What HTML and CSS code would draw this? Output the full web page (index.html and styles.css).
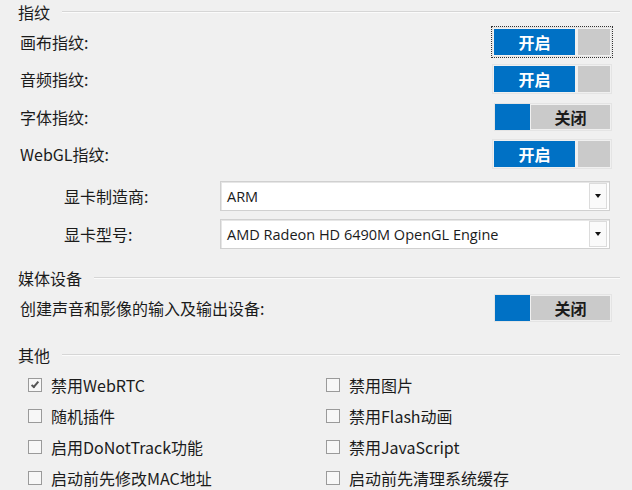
FILE: index.html
```html
<!DOCTYPE html>
<html>
<head>
<meta charset="utf-8">
<link rel="stylesheet" href="styles.css">
</head>
<body>
<div class="sec first"><span>指纹</span><div class="rule"></div></div>
<div class="row"><span class="lbl">画布指纹:</span><div class="toggle on focus"><span class="knob">开启</span><span class="rest"></span></div></div>
<div class="row"><span class="lbl">音频指纹:</span><div class="toggle on"><span class="knob">开启</span><span class="rest"></span></div></div>
<div class="row"><span class="lbl">字体指纹:</span><div class="toggle off"><span class="knob"></span><span class="rest">关闭</span></div></div>
<div class="row"><span class="lbl">WebGL指纹:</span><div class="toggle on"><span class="knob">开启</span><span class="rest"></span></div></div>

<div class="subs">
    <div class="sub"><span class="sublbl">显卡制造商:</span><div class="combo"><span class="val">ARM</span><span class="drop"></span></div></div>
    <div class="sub"><span class="sublbl">显卡型号:</span><div class="combo"><span class="val">AMD Radeon HD 6490M OpenGL Engine</span><span class="drop"></span></div></div>
</div>

<div class="sec media"><span>媒体设备</span><div class="rule"></div></div>
<div class="row mrow"><span class="lbl">创建声音和影像的输入及输出设备:</span><div class="toggle off"><span class="knob"></span><span class="rest">关闭</span></div></div>

<div class="sec other"><span>其他</span><div class="rule"></div></div>
<div class="checks">
    <label class="chk"><span class="box checked"></span>禁用WebRTC</label>
    <label class="chk"><span class="box"></span>禁用图片</label>
    <label class="chk"><span class="box"></span>随机插件</label>
    <label class="chk"><span class="box"></span>禁用Flash动画</label>
    <label class="chk"><span class="box"></span>启用DoNotTrack功能</label>
    <label class="chk"><span class="box"></span>禁用JavaScript</label>
    <label class="chk"><span class="box"></span>启动前先修改MAC地址</label>
    <label class="chk"><span class="box"></span>启动前先清理系统缓存</label>
</div>
</body>
</html>
```

FILE: styles.css
```css
body {
    margin: 0;
    background: #f0f0f0;
    color: #1b1b1b;
    font-family: "Noto Sans CJK SC", "Microsoft YaHei", sans-serif;
    font-size: 16px;
    width: 632px;
    height: 490px;
    overflow: hidden;
}

.sec {
    display: flex;
    align-items: center;
    height: 24px;
    padding-left: 18px;
    padding-right: 12px;
}
.sec .rule {
    flex: 1;
    margin-left: 12px;
    border-top: 1px solid #d6d6d6;
    border-bottom: 1px solid #fbfbfb;
}
.first { height: 23px; }
.media { margin-top: 13px; }
.other { margin-top: 18px; }

.row {
    display: flex;
    align-items: center;
    justify-content: space-between;
    height: 37.5px;
    padding-left: 20px;
    padding-right: 20px;
}
.mrow { height: 35px; }

.toggle {
    display: flex;
    width: 116px;
    height: 26px;
    border: 1px solid #e4e4e4;
    font-size: 16px;
    font-weight: bold;
    box-sizing: content-box;
}
.toggle span {
    display: flex;
    align-items: center;
    justify-content: center;
}
.toggle .knob {
    background: #0071c5;
    color: #fff;
}
.toggle .rest {
    flex: 1;
    background: #cacaca;
    color: #1b1b1b;
}
.on { padding: 1px; }
.on .knob { width: 81px; margin-right: 3px; }
.off .knob { width: 35px; margin-right: 1px; }
.off .rest { margin: 1px 1px 1px 0; }
.focus { outline: 1px dotted #333; outline-offset: 0; }

.subs { padding-top: 4px; }
.sub {
    display: flex;
    align-items: center;
    height: 38px;
    padding-left: 64px;
}
.sublbl { width: 156px; }
.combo {
    display: flex;
    align-items: center;
    width: 388px;
    height: 28px;
    background: #fff;
    border: 1px solid #d0d0d0;
    box-shadow: inset 1px 1px 0 #e6e6e6;
    font-family: "Open Sans", "Noto Sans", sans-serif;
    font-size: 14.5px;
}
.combo .val {
    flex: 1;
    padding-left: 6px;
}
.drop {
    position: relative;
    width: 16px;
    height: 24px;
    margin-right: 2px;
    border: 1px solid #dcdcdc;
    background: #fafafa;
}
.drop::after {
    content: "";
    position: absolute;
    left: 5px;
    top: 10px;
    border-left: 3px solid transparent;
    border-right: 3px solid transparent;
    border-top: 4px solid #111;
}

.checks {
    display: grid;
    grid-template-columns: 298px 298px;
    grid-auto-rows: 31px;
    padding-left: 28px;
    margin-top: 2px;
}
.chk {
    display: flex;
    align-items: center;
}
.box {
    position: relative;
    width: 12px;
    height: 12px;
    border: 1px solid #9a9a9a;
    background: #f7f7f7;
    margin-right: 9px;
}
.box.checked::after {
    content: "";
    position: absolute;
    left: 4px;
    top: 1px;
    width: 2px;
    height: 6px;
    border-right: 2px solid #555;
    border-bottom: 2px solid #555;
    transform: rotate(40deg);
}
```
